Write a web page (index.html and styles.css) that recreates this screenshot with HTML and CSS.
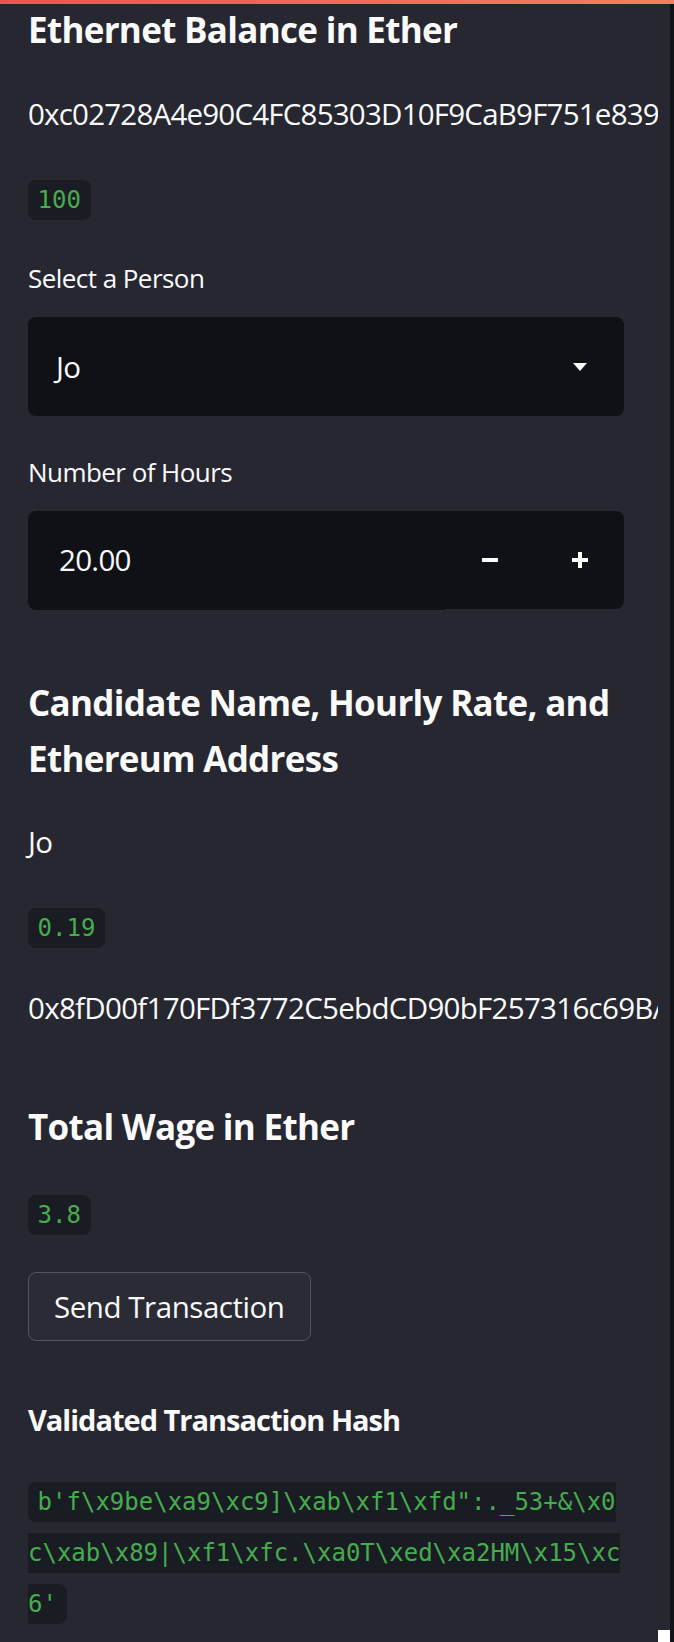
FILE: index.html
```html
<!DOCTYPE html>
<html lang="en">
<head>
<meta charset="utf-8">
<title>Ethernet Balance</title>
<link rel="stylesheet" href="styles.css">
</head>
<body>
<div class="topbar"></div>
<div class="app">
  <aside class="sidebar">
    <div class="scroll">
      <div class="content">
        <h2 class="heading">Ethernet Balance in Ether</h2>
        <p class="text addr m-addr1">0xc02728A4e90C4FC85303D10F9CaB9F751e839</p>
        <p class="text m-32"><code>100</code></p>

        <div class="field m-32">
          <label class="label">Select a Person</label>
          <div class="select">
            <span class="select-value">Jo</span>
            <svg class="caret" width="14" height="8" viewBox="0 0 14 8"><polygon points="0,0 14,0 7,8" fill="#fafafa"/></svg>
          </div>
        </div>

        <div class="field m-32">
          <label class="label">Number of Hours</label>
          <div class="number">
            <div class="num-value">20.00</div>
            <button class="step step-minus" type="button" aria-label="minus">
              <svg width="16" height="4" viewBox="0 0 16 4"><rect width="16" height="4" fill="#fafafa"/></svg>
            </button>
            <button class="step step-plus" type="button" aria-label="plus">
              <svg width="16" height="16" viewBox="0 0 16 16"><rect x="0" y="6" width="16" height="4" fill="#fafafa"/><rect x="6" y="0" width="4" height="16" fill="#fafafa"/></svg>
            </button>
          </div>
        </div>

        <h2 class="heading sub m-32">Candidate Name, Hourly Rate, and Ethereum Address</h2>
        <p class="text m-29">Jo</p>
        <p class="text m-32"><code>0.19</code></p>
        <p class="text m-32">0x8fD00f170FDf3772C5ebdCD90bF257316c69BA</p>

        <h2 class="heading sub m-32">Total Wage in Ether</h2>
        <p class="text m-31"><code>3.8</code></p>

        <button class="btn m-35" type="button">Send Transaction</button>

        <p class="text m-53"><strong>Validated Transaction Hash</strong></p>
        <p class="text m-28"><code class="wrap">b'f\x9be\xa9\xc9]\xab\xf1\xfd&quot;:._53+&amp;\x0c\xab\x89|\xf1\xfc.\xa0T\xed\xa2HM\x15\xc6'</code></p>
      </div>
    </div>
    <div class="gutter"><div class="corner"></div></div>
  </aside>
  <div class="edge"></div>
</div>
</body>
</html>
```

FILE: styles.css
```css
html, body {
  margin: 0;
  padding: 0;
}

body {
  background: #262730;
  color: #fafafa;
  font-family: "Open Sans", "Noto Sans", sans-serif;
}

.topbar {
  position: fixed;
  top: 0;
  left: 0;
  right: 0;
  height: 4px;
  background: linear-gradient(90deg, #f0534f, #f47e62);
  z-index: 5;
}

.app {
  display: flex;
  height: 1642px;
}

.sidebar {
  display: flex;
  width: 670px;
}

.scroll {
  width: 658px;
  overflow: hidden;
}

.gutter {
  width: 12px;
  position: relative;
}

.corner {
  position: absolute;
  left: 0;
  bottom: 0;
  width: 12px;
  height: 12px;
  background: #ffffff;
}

.edge {
  width: 4px;
  background: #111318;
}

.content {
  width: 596px;
  padding: 2px 0 0 28px;
}

/* spacing helpers */
.m-addr1 { margin-top: 30px !important; }
.m-28 { margin-top: 28px !important; }
.m-29 { margin-top: 29px !important; }
.m-31 { margin-top: 31px !important; }
.m-32 { margin-top: 32px !important; }
.m-35 { margin-top: 35px !important; }
.m-53 { margin-top: 53px !important; }

.heading {
  margin: 0;
  font-size: 35px;
  line-height: 56px;
  font-weight: 700;
  letter-spacing: -0.7px;
}

.heading.sub {
  padding-top: 34px;
}

.text {
  margin: 0;
  font-size: 29.5px;
  line-height: 51px;
  letter-spacing: -0.7px;
}

.text.addr {
  letter-spacing: -0.78px;
}

.text strong {
  font-size: 29px;
  font-weight: 700;
  letter-spacing: -1px;
}

code {
  font-family: "DejaVu Sans Mono", "Liberation Mono", monospace;
  font-size: 24px;
  line-height: 24px;
  letter-spacing: 0;
  color: #46ac4e;
  background: #1a1c23;
  padding: 6px 9.6px;
  border-radius: 8px;
}

code.wrap {
  word-break: break-all;
}

.field {
  display: block;
}

.label {
  display: block;
  font-size: 26px;
  line-height: 49px;
  letter-spacing: -0.55px;
  margin-bottom: 14px;
}

.select {
  box-sizing: border-box;
  height: 99px;
  background: #0f1116;
  border-radius: 8px;
  display: flex;
  align-items: center;
  justify-content: space-between;
  padding: 0 37px 0 28px;
}

.select-value {
  font-size: 29.5px;
  line-height: 99px;
  letter-spacing: -0.7px;
}

.caret {
  display: block;
}

.number {
  display: flex;
  align-items: flex-start;
  height: 98px;
}

.num-value {
  box-sizing: border-box;
  width: 417px;
  height: 99px;
  background: #0f1116;
  border-radius: 8px 0 0 8px;
  padding-left: 31px;
  font-size: 29.5px;
  line-height: 98px;
  letter-spacing: -0.7px;
}

.step {
  height: 98px;
  border: 0;
  padding: 0;
  margin: 0;
  background: #0f1116;
  display: flex;
  align-items: center;
  justify-content: center;
}

.step svg {
  display: block;
}

.step-minus {
  width: 90px;
}

.step-plus {
  width: 89px;
  border-radius: 0 8px 8px 0;
}

.btn {
  display: flex;
  align-items: center;
  width: fit-content;
  box-sizing: border-box;
  height: 69px;
  padding: 0 25px;
  margin: 0;
  background: #2a2b35;
  border: 1px solid #53545e;
  border-radius: 8px;
  color: #fafafa;
  font-family: "Open Sans", "Noto Sans", sans-serif;
  font-size: 29.5px;
  letter-spacing: -0.45px;
}
```
